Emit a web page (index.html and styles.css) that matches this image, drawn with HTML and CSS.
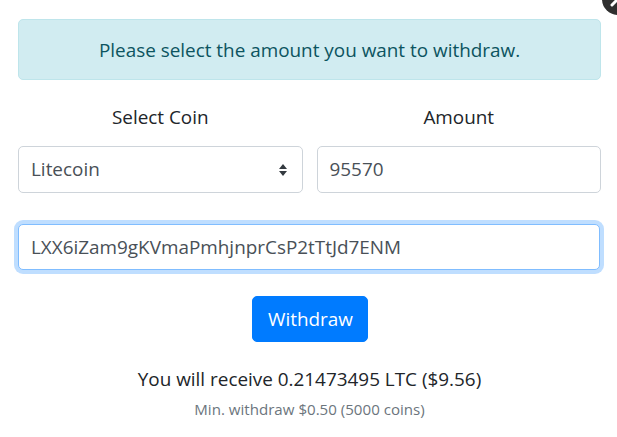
FILE: index.html
```html
<!DOCTYPE html>
<html>
<head>
<meta charset="utf-8">
<link rel="stylesheet" href="styles.css">
</head>
<body>
<div class="close-btn"><svg width="32" height="32" viewBox="0 0 32 32"><path d="M10 10 L22 22 M22 10 L10 22" stroke="#fff" stroke-width="3" stroke-linecap="round"/></svg></div>
<main class="panel">
  <div class="alert">Please select the amount you want to withdraw.</div>
  <div class="row">
    <div class="col">
      <label class="label">Select Coin</label>
      <div class="select">
        <span>Litecoin</span>
        <svg class="arrows" width="10" height="14" viewBox="0 0 10 14"><path d="M5 1 L9 6 H1 Z M5 13 L1 8 H9 Z" fill="#343a40"/></svg>
      </div>
    </div>
    <div class="col">
      <label class="label">Amount</label>
      <div class="input">95570</div>
    </div>
  </div>
  <div class="input address">LXX6iZam9gKVmaPmhjnprCsP2tTtJd7ENM</div>
  <div class="actions"><button class="btn">Withdraw</button></div>
  <p class="receive">You will receive 0.21473495 LTC ($9.56)</p>
  <p class="min">Min. withdraw $0.50 (5000 coins)</p>
</main>
</body>
</html>
```
FILE: styles.css
```css
* { box-sizing: border-box; }
html, body { margin: 0; padding: 0; background: #fff; }
body {
  font-family: "Open Sans", "Noto Sans", sans-serif;
  font-size: 18.9px;
  line-height: 1.5;
  color: #212529;
  width: 617px;
  height: 437px;
  overflow: hidden;
  position: relative;
}
.close-btn {
  position: absolute;
  left: 602px;
  top: -17px;
  width: 32px;
  height: 32px;
  border-radius: 50%;
  background: #2f2f2f;
  display: flex;
}
.panel {
  padding: 19px 16px 0 18px;
}
.alert {
  background: #d1ecf1;
  border: 1px solid #bee5eb;
  color: #0c5460;
  border-radius: 5px;
  height: 61px;
  display: flex;
  align-items: center;
  justify-content: center;
  padding-top: 2px;
  margin-bottom: 22px;
}
.row {
  display: flex;
  gap: 14px;
}
.col {
  flex: 1;
  display: flex;
  flex-direction: column;
}
.label {
  text-align: center;
  height: 30px;
  line-height: 30px;
  margin-bottom: 14px;
}
.select, .input {
  height: 47px;
  border: 1px solid #ced4da;
  border-radius: 5px;
  color: #495057;
  display: flex;
  align-items: center;
  padding: 0 15px 0 12px;
  background: #fff;
}
.select { justify-content: space-between; padding-right: 14px; }
.arrows { display: block; }
.address {
  margin-top: 31px;
  margin-right: 1px;
  height: 46px;
  border-color: #80bdff;
  box-shadow: 0 0 0 4px rgba(0, 123, 255, 0.25);
}
.actions {
  display: flex;
  justify-content: center;
  margin-top: 26px;
}
.btn {
  font: inherit;
  color: #fff;
  background: #007bff;
  border: 1px solid #007bff;
  border-radius: 5px;
  height: 46px;
  width: 116px;
  padding: 0 0 0 1px;
  margin-left: 1px;
}
.receive {
  margin: 22px 0 0;
  text-align: center;
  line-height: 30px;
}
.min {
  margin: 0;
  text-align: center;
  font-size: 15.1px;
  line-height: 30px;
  color: #6c757d;
}
```
